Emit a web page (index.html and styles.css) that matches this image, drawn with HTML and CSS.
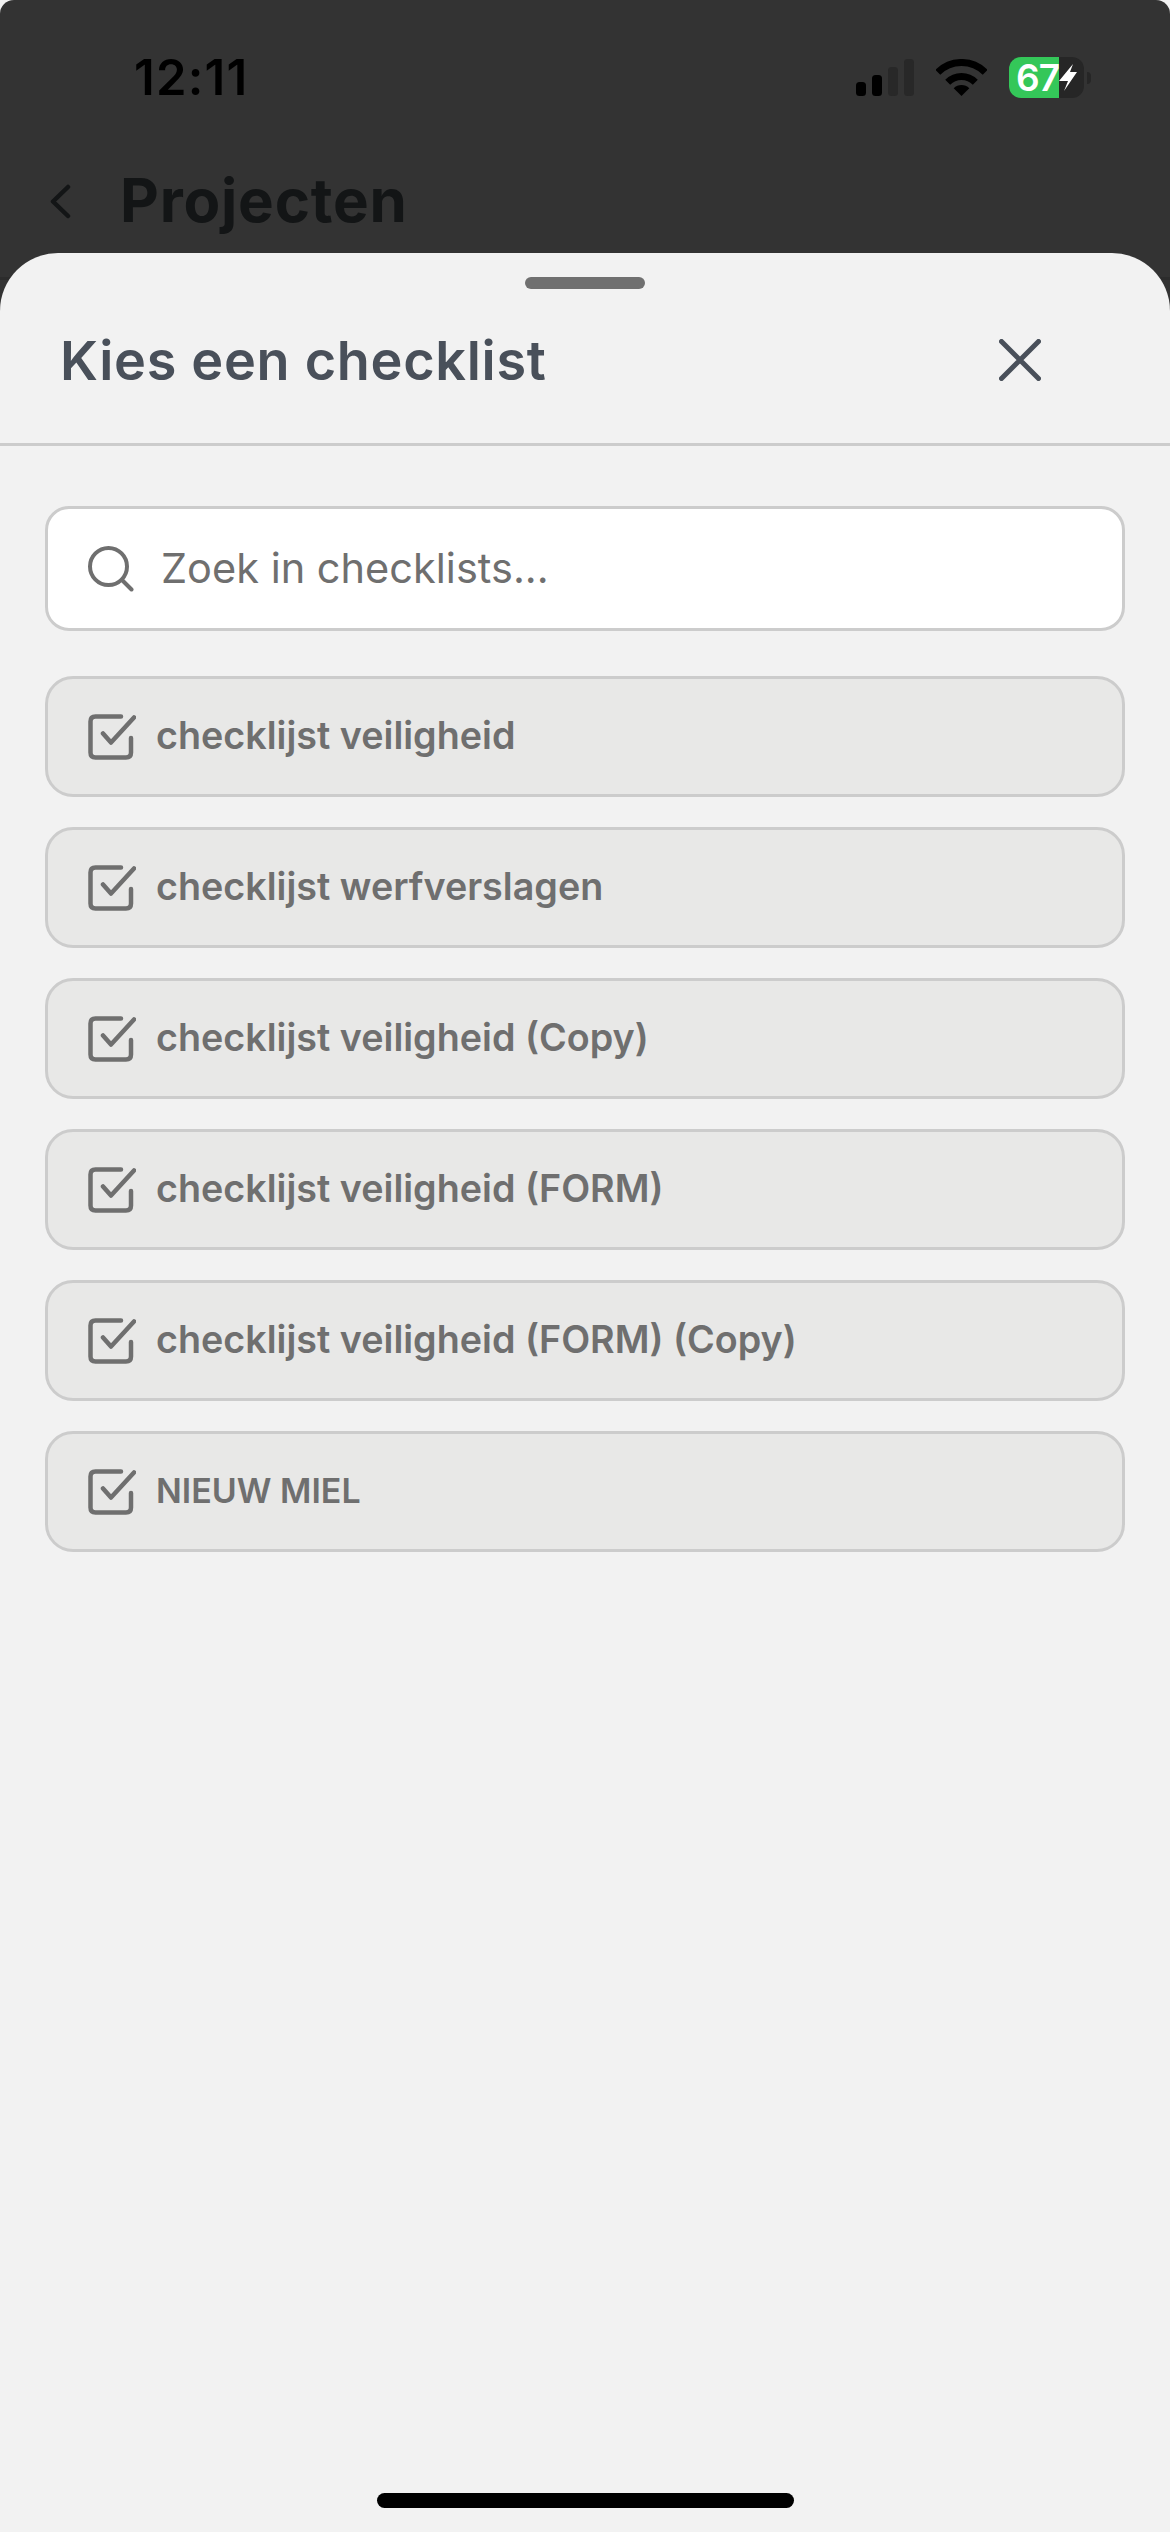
FILE: index.html
```html
<!DOCTYPE html>
<html lang="nl">
  <head>
    <meta charset="utf-8"/>
    <title>Kies een checklist</title>
    <meta name="viewport" content="width=device-width, initial-scale=1.0"/>
    <link rel="stylesheet" href="styles.css">
  </head>
  <body>
    <div class="screen">
      <div class="status-bar">
        <span class="time">12:11</span>
        <div class="status-icons">
          <svg width="58" height="37" viewBox="0 0 58 37">
            <rect x="0" y="23" width="10" height="14" rx="3.5" fill="#000"/>
            <rect x="16" y="16" width="10" height="21" rx="3.5" fill="#000"/>
            <rect x="32" y="8" width="10" height="29" rx="3.5" fill="#282828"/>
            <rect x="48" y="0" width="10" height="37" rx="3.5" fill="#282828"/>
          </svg>
          <svg width="51" height="37" viewBox="0 0 51 37">
            <path d="M25.500 37 L17.700 29.200 A11 11 0 0 1 33.300 29.200 Z" fill="#000"/>
            <path d="M11.700 23.200 A19.500 19.500 0 0 1 39.300 23.200" fill="none" stroke="#000" stroke-width="7"/>
            <path d="M1.800 13.300 A33.500 33.500 0 0 1 49.200 13.300" fill="none" stroke="#000" stroke-width="7"/>
          </svg>
          <div class="battery">
            <div class="battery-body">
              <span class="battery-level">67</span>
              <svg width="19" height="27" viewBox="0 0 19 27">
                <path d="M14 0 L0 17 H9 L5 27 L18 8 H11 Z" fill="#fff"/>
              </svg>
            </div>
            <span class="battery-cap"></span>
          </div>
        </div>
      </div>

      <div class="top-bar">
        <svg width="21" height="35" viewBox="0 0 21 35">
          <path d="M18 3 L3 17.500 L18 32" fill="none" stroke="#131516" stroke-width="4.500" stroke-linecap="round" stroke-linejoin="round"/>
        </svg>
        <h2 class="page-title">Projecten</h2>
      </div>

      <div class="sheet">
        <div class="handle"></div>
        <div class="sheet-head">
          <h1 class="sheet-title">Kies een checklist</h1>
          <svg width="42" height="42" viewBox="0 0 42 42">
            <path d="M2.500 2.500 L39.500 39.500 M39.500 2.500 L2.500 39.500" fill="none" stroke="#49505a" stroke-width="5" stroke-linecap="round"/>
          </svg>
        </div>

        <div class="sheet-body">
          <div class="search">
            <svg width="46" height="46" viewBox="0 0 46 46">
              <circle cx="20.500" cy="20.500" r="18.500" fill="none" stroke="#6f6f6f" stroke-width="4"/>
              <path d="M34 34 L43.500 43.500" fill="none" stroke="#6f6f6f" stroke-width="4" stroke-linecap="round"/>
            </svg>
            <span class="search-text">Zoek in checklists...</span>
          </div>

          <div class="list">
            <div class="item">
              <svg width="48" height="46"><use href="#check-icon"/></svg>
              <span>checklijst veiligheid</span>
            </div>
            <div class="item">
              <svg width="48" height="46"><use href="#check-icon"/></svg>
              <span>checklijst werfverslagen</span>
            </div>
            <div class="item">
              <svg width="48" height="46"><use href="#check-icon"/></svg>
              <span>checklijst veiligheid (Copy)</span>
            </div>
            <div class="item">
              <svg width="48" height="46"><use href="#check-icon"/></svg>
              <span>checklijst veiligheid (FORM)</span>
            </div>
            <div class="item">
              <svg width="48" height="46"><use href="#check-icon"/></svg>
              <span>checklijst veiligheid (FORM) (Copy)</span>
            </div>
            <div class="item item-caps">
              <svg width="48" height="46"><use href="#check-icon"/></svg>
              <span>NIEUW MIEL</span>
            </div>
          </div>
        </div>

        <div class="home-bar"></div>
      </div>
    </div>

    <svg class="defs" width="0" height="0">
      <symbol id="check-icon" viewBox="0 0 48 46">
        <path d="M33 2.500 H7.500 Q2.500 2.500 2.500 7.500 V38.500 Q2.500 43.500 7.500 43.500 H38 Q43 43.500 43 38.500 V24" fill="none" stroke="#6f6f6f" stroke-width="4.500" stroke-linecap="round"/>
        <path d="M15 19.500 L23 28.500 L46 3.500" fill="none" stroke="#6f6f6f" stroke-width="4.500" stroke-linecap="round" stroke-linejoin="round"/>
      </symbol>
    </svg>
  </body>
</html>
```

FILE: styles.css
```css
* {
  box-sizing: border-box;
  font-family: Inter, "Liberation Sans", sans-serif;
}
html, body {
  margin: 0;
  background-color: #f2f2f2;
}
h1, h2 {
  margin: 0;
}
.screen {
  width: 1170px;
  height: 2532px;
  display: flex;
  flex-direction: column;
  background-color: #333333;
  border-radius: 14px 14px 0 0;
  overflow: hidden;
}
.status-bar {
  height: 156px;
  padding: 52px 79px 0 134px;
  display: flex;
  justify-content: space-between;
  align-items: flex-start;
}
.time {
  font-size: 49px;
  line-height: 52px;
  font-weight: 600;
  letter-spacing: 1.2px;
  color: #000;
}
.status-icons {
  display: flex;
  align-items: flex-start;
  gap: 22px;
  padding-top: 7px;
}
.battery {
  display: flex;
  align-items: center;
  gap: 3px;
  margin-top: -2px;
}
.battery-body {
  width: 75px;
  height: 41px;
  border-radius: 12px;
  display: flex;
  align-items: center;
  background-color: #262626;
}
.battery-level {
  width: 50px;
  height: 41px;
  background-color: #34c759;
  border-radius: 12px 0 0 12px;
  color: #fff;
  font-size: 37px;
  line-height: 41px;
  font-weight: 600;
  letter-spacing: -1px;
  text-align: right;
  flex-shrink: 0;
}
.battery-cap {
  width: 4px;
  height: 12px;
  border-radius: 0 6px 6px 0;
  background-color: #262626;
}
.top-bar {
  height: 124px;
  padding: 0 0 0 50px;
  display: flex;
  align-items: flex-start;
  gap: 49px;
  border-bottom: 3px solid #2c2c2c;
}
.top-bar svg {
  margin-top: 28px;
}
.page-title {
  font-size: 60px;
  line-height: 72px;
  font-weight: 700;
  letter-spacing: 0.8px;
  color: #131516;
  margin-top: 8px;
}
.sheet {
  flex: 1;
  margin-top: -27px;
  display: flex;
  flex-direction: column;
  background-color: #f2f2f2;
  border-radius: 58px 58px 0 0;
}
.handle {
  width: 120px;
  height: 12px;
  margin: 24px auto 0;
  border-radius: 6px;
  background-color: #707070;
}
.sheet-head {
  height: 157px;
  padding: 0 129px 12px 60px;
  display: flex;
  justify-content: space-between;
  align-items: center;
  border-bottom: 3px solid #cccccc;
}
.sheet-title {
  font-size: 54px;
  font-weight: 600;
  letter-spacing: 0.7px;
  color: #49505a;
}
.sheet-body {
  flex: 1;
  padding: 60px 45px 0;
}
.search {
  height: 125px;
  padding: 0 0 0 40px;
  display: flex;
  align-items: center;
  gap: 27px;
  background-color: #fff;
  border: 3px solid #cccccc;
  border-radius: 24px;
}
.search-text {
  font-size: 41.500px;
  margin-top: -2px;
  color: #6f6f6f;
}
.list {
  margin-top: 45px;
  display: flex;
  flex-direction: column;
  gap: 30px;
}
.item {
  height: 121px;
  padding: 0 0 0 40px;
  display: flex;
  align-items: center;
  gap: 20px;
  background-color: #e8e8e7;
  border: 3px solid #cccccc;
  border-radius: 28px;
  font-size: 37.700px;
  font-weight: 600;
  color: #6f6f6f;
}
.item span {
  margin-top: -3px;
}
.item-caps {
  font-size: 34px;
}
.home-bar {
  width: 417px;
  height: 15px;
  margin: 0 auto 24px;
  border-radius: 8px;
  background-color: #000;
}
.defs {
  position: absolute;
}
```
